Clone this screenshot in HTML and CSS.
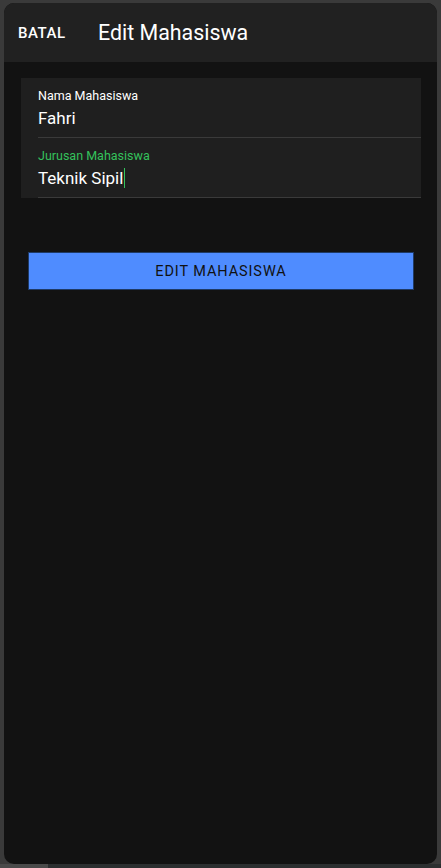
FILE: index.html
```html
<!DOCTYPE html>
<html>
<head>
<meta charset="utf-8">
<link rel="stylesheet" href="styles.css">
</head>
<body>
<div class="screen">
  <div class="phone">
    <header class="appbar">
      <span class="cancel">BATAL</span>
      <span class="title">Edit Mahasiswa</span>
    </header>
    <main class="content">
      <div class="card">
        <div class="field">
          <div class="label">Nama Mahasiswa</div>
          <div class="value">Fahri</div>
        </div>
        <div class="field">
          <div class="label active">Jurusan Mahasiswa</div>
          <div class="value">Teknik Sipil<span class="caret"></span></div>
        </div>
      </div>
      <button class="submit">EDIT MAHASISWA</button>
    </main>
  </div>
  <div class="bottombar"><span class="bottomleft"></span></div>
</div>
</body>
</html>
```
FILE: styles.css
```css
* { box-sizing: border-box; }
html, body { margin: 0; padding: 0; }
body {
  width: 441px;
  height: 868px;
  background: #3a3a3a;
  font-family: Roboto, "Noto Sans", sans-serif;
  overflow: hidden;
}
.screen {
  display: flex;
  flex-direction: column;
  height: 868px;
  padding: 3px 4px 0 4px;
}
.phone {
  height: 861px;
  background: #121212;
  border-radius: 10px;
  overflow: hidden;
  display: flex;
  flex-direction: column;
}
.appbar {
  height: 59px;
  background: #212121;
  display: flex;
  align-items: center;
  padding-left: 14px;
  color: #fff;
  flex-shrink: 0;
}
.cancel {
  font-size: 15px;
  font-weight: 500;
  letter-spacing: 0.5px;
  width: 80px;
}
.title {
  font-size: 21.4px;
}
.content {
  padding: 16px 16px 0 17px;
  display: flex;
  flex-direction: column;
}
.card {
  background: #1f1f1f;
  padding: 0 0 0 17px;
}
.field {
  border-bottom: 1px solid #3a3a3a;
  height: 60px;
  padding-top: 11px;
}
.label {
  font-size: 12.5px;
  color: #fff;
  line-height: 14px;
}
.label.active { color: #34c25c; }
.value {
  font-size: 17px;
  color: #fff;
  line-height: 20px;
  margin-top: 5px;
  display: flex;
  align-items: center;
}
.caret {
  display: inline-block;
  width: 1px;
  height: 20px;
  background: #34c25c;
  margin-left: 1px;
}
.submit {
  margin: 54px 7px 0 7px;
  height: 38px;
  background: #4f8cff;
  border: 1px solid #1e3a66;
  color: #111;
  font-family: Roboto, "Noto Sans", sans-serif;
  font-size: 14.5px;
  letter-spacing: 0.9px;
  padding: 0;
}
.bottombar {
  height: 4px;
  margin: 0 -4px;
  background: #2c2f30;
  display: flex;
}
.bottomleft {
  width: 48px;
  background: #4a4a4a;
}
```
